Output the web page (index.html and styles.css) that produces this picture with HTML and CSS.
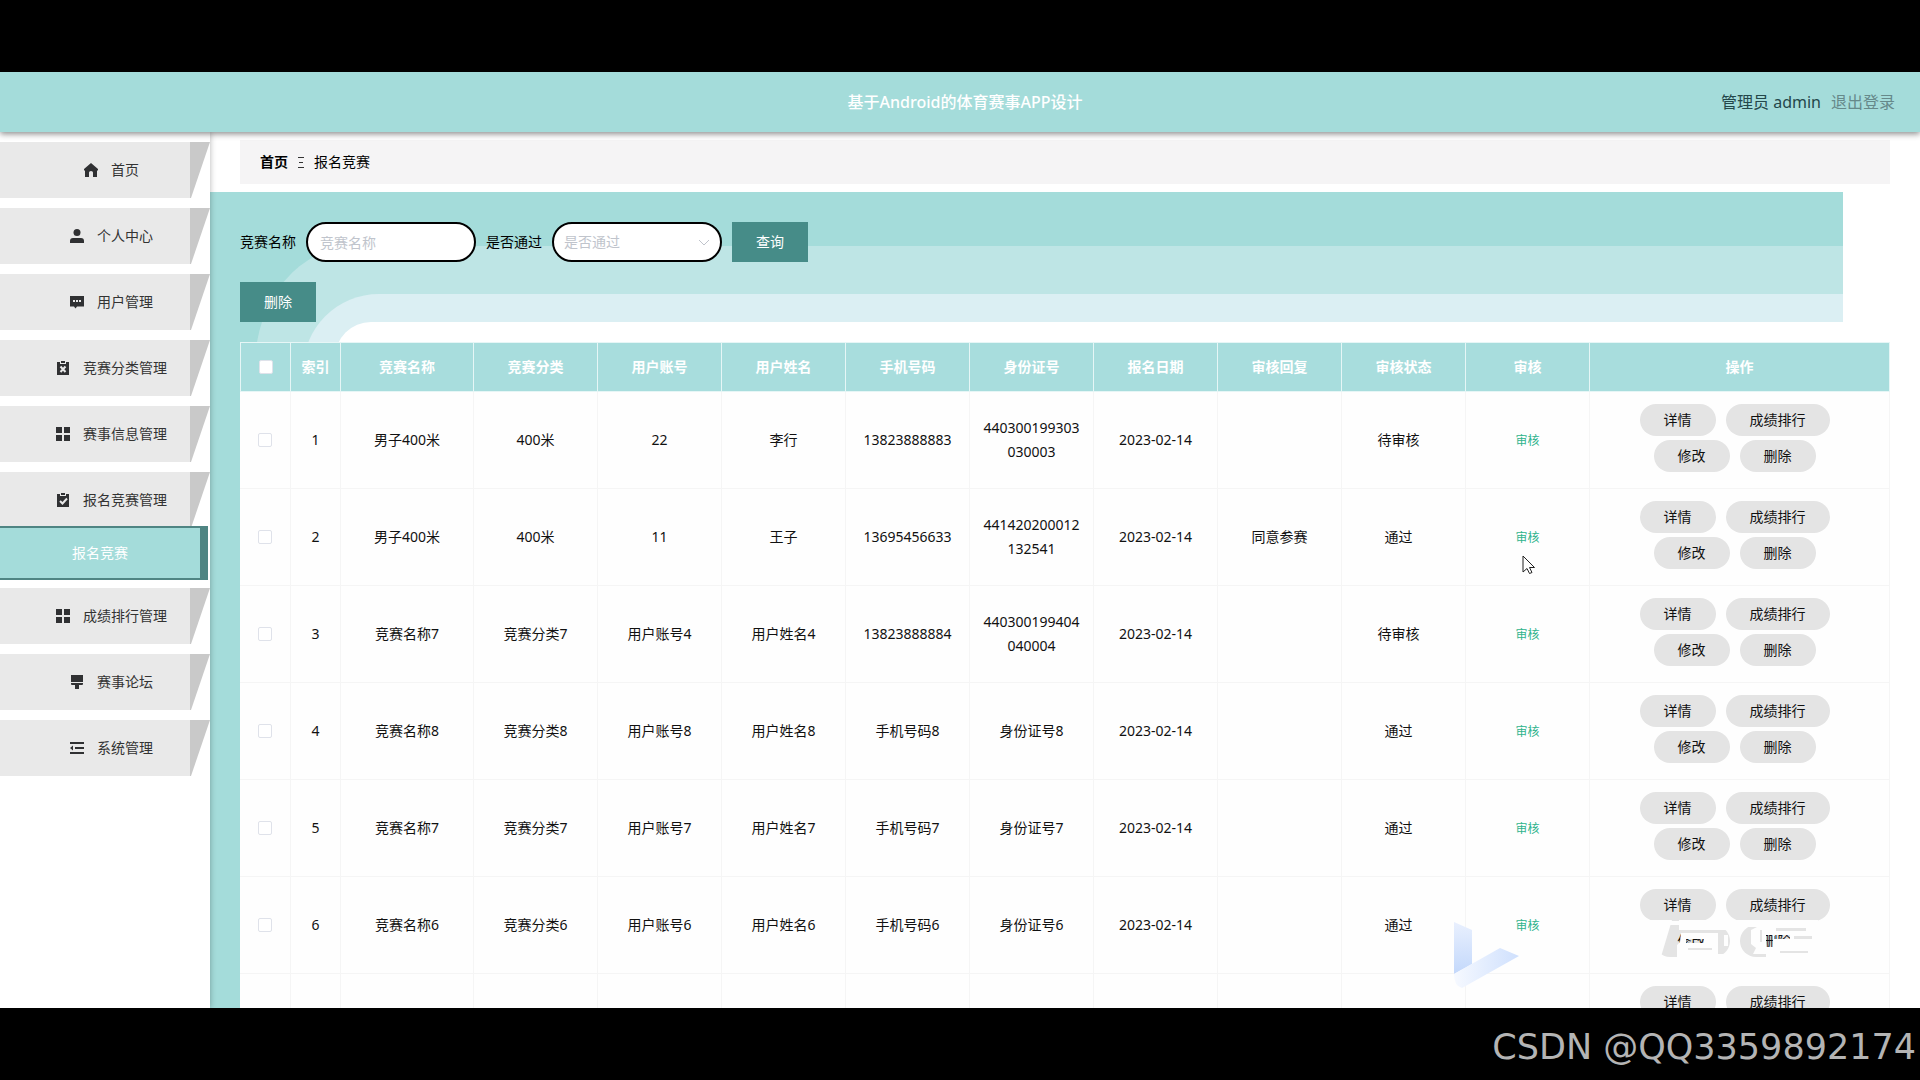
FILE: index.html
```html
<!DOCTYPE html>
<html lang="zh-CN">
<head>
<meta charset="utf-8">
<title>基于Android的体育赛事APP设计</title>
<link rel="stylesheet" href="styles.css">
</head>
<body>
<div class="stage">
  <header class="topbar">
    <h1 class="topbar-title">基于Android的体育赛事APP设计</h1>
    <div class="topbar-user"><span>管理员 admin</span><a href="#" class="logout">退出登录</a></div>
  </header>
  <div class="layout">
    <nav class="sidebar">
      <a href="#" class="menu-item"><span class="menu-label"><svg class="icon" viewBox="0 0 14 14"><path d="M7 0L0 6V7.500H1V14H5V9.500Q5 8 7 8Q9 8 9 9.500V14H13V7.500H14V6Z"/></svg>首页</span></a>
      <a href="#" class="menu-item"><span class="menu-label"><svg class="icon" viewBox="0 0 14 14"><circle cx="7" cy="3.500" r="3.500"/><path d="M0 14V12Q0 9 3 9H11Q14 9 14 12V14Z"/></svg>个人中心</span></a>
      <a href="#" class="menu-item"><span class="menu-label"><svg class="icon" viewBox="0 0 14 14"><path fill-rule="evenodd" d="M0 1H14V11.500H7L5.500 13.500L4 11.500H0ZM3 5V7H5V5ZM6 5V7H8V5ZM9 5V7H11V5Z"/></svg>用户管理</span></a>
      <a href="#" class="menu-item"><span class="menu-label"><svg class="icon" viewBox="0 0 14 14"><path d="M1 1H4V3H10V1H13V14H1ZM5 0H9V2H5Z"/><path class="cut" d="M4.500 5.500L9.500 11M9.500 5.500L4.500 11"/></svg>竞赛分类管理</span></a>
      <a href="#" class="menu-item"><span class="menu-label"><svg class="icon" viewBox="0 0 14 14"><path d="M0 0H6V6H0ZM8 0H14V6H8ZM0 8H6V14H0ZM8 8H14V14H8Z"/></svg>赛事信息管理</span></a>
      <div class="menu-group">
        <a href="#" class="menu-item"><span class="menu-label"><svg class="icon" viewBox="0 0 14 14"><path d="M1 1H4V3H10V1H13V14H1ZM5 0H9V2H5Z"/><path class="cut" d="M4 8L6.500 10.500L11 5.500"/></svg>报名竞赛管理</span></a>
        <a href="#" class="submenu-item">报名竞赛</a>
      </div>
      <a href="#" class="menu-item"><span class="menu-label"><svg class="icon" viewBox="0 0 14 14"><path d="M0 0H6V6H0ZM8 0H14V6H8ZM0 8H6V14H0ZM8 8H14V14H8Z"/></svg>成绩排行管理</span></a>
      <a href="#" class="menu-item"><span class="menu-label"><svg class="icon" viewBox="0 0 14 14"><path d="M1 0H13V7H1ZM1 8H13V9Q13 10 12 10H9V14H5V10H2Q1 10 1 9Z"/></svg>赛事论坛</span></a>
      <a href="#" class="menu-item"><span class="menu-label"><svg class="icon" viewBox="0 0 14 14"><path d="M0 1H14V3H0ZM5 6H14V8H5ZM0 11H14V13H0ZM3 4.500V9.500L0 7Z"/></svg>系统管理</span></a>
    </nav>
    <main class="main">
      <div class="crumbs"><a href="#" class="crumb-home">首页</a><span class="crumb-sep" aria-hidden="true"></span><span>报名竞赛</span></div>
      <section class="panel">
        <div class="band band-a" aria-hidden="true"><div class="band band-b"><div class="band band-c"><div class="band band-d"></div></div></div></div>
        <form class="search">
          <label for="f-name">竞赛名称</label>
          <input class="field" id="f-name" type="text" placeholder="竞赛名称">
          <label for="f-pass">是否通过</label>
          <div class="select-wrap">
            <select class="field" id="f-pass"><option>是否通过</option></select>
            <svg class="chevron" viewBox="0 0 12 8"><path d="M1 1L6 6L11 1"/></svg>
          </div>
          <button class="btn" type="button">查询</button>
        </form>
        <div class="toolbar"><button class="btn" type="button">删除</button></div>
        <table class="grid">
          <colgroup><col class="c-tick"><col class="c-index"><col class="c-name"><col><col><col><col><col><col><col><col><col><col class="c-ops"></colgroup>
          <thead><tr><th><input type="checkbox" class="tick tick-all" aria-label="全选"></th><th>索引</th><th>竞赛名称</th><th>竞赛分类</th><th>用户账号</th><th>用户姓名</th><th>手机号码</th><th>身份证号</th><th>报名日期</th><th>审核回复</th><th>审核状态</th><th>审核</th><th>操作</th></tr></thead>
          <tbody id="rows"></tbody>
        </table>
      </section>
    </main>
  </div>
  <svg class="cursor" viewBox="0 0 14 20"><path d="M1 1V17L5 13.500L7.500 18.500L10 17.500L7.500 12.500H12.500Z"/></svg>
  <svg class="logo-mark" viewBox="0 0 66 72"><defs><linearGradient id="g1" x1="0" y1="0" x2="0" y2="1"><stop offset="0" stop-color="#e9f0fe"/><stop offset="1" stop-color="#c3d8fb"/></linearGradient><linearGradient id="g2" x1="0" y1="0" x2="1" y2="0"><stop offset="0" stop-color="#f6f9ff"/><stop offset="1" stop-color="#cfe0fd"/></linearGradient></defs><path fill="url(#g1)" d="M0 4L18 12V46L0 56Z"/><path fill="url(#g2)" d="M0 56L46 30L65 38L8 70Q0 68 0 56Z"/></svg>
  <svg class="ghost-mark" viewBox="0 0 190 50"><path fill-rule="evenodd" d="M8 2H32L20 42H8ZM39 2H92V12H39ZM41 15H78V42H37V27L40 24ZM46 21V25H64V21ZM48 30V32H72V30ZM84 17H88V28H84ZM78 36H92V42H78Z"/><path fill-rule="evenodd" d="M96 2H178V42H126V36H113L116 30L111 26V12L117 9H96ZM126 17V29H133V17ZM136 10V13H166V10ZM134 17V21H150V17ZM154 18V21H172V18ZM140 33V35H168V33ZM120 12V24H122V12Z"/></svg>
</div>
<div class="credit">CSDN @QQ3359892174</div>
<script src="rows.js"></script>
</body>
</html>
```
FILE: styles.css
```css
* { box-sizing: border-box; }
body {
  margin: 0;
  min-height: 100vh;
  display: flex;
  flex-direction: column;
  padding-top: 72px;
  background: #000;
  color: #111;
  font: 14px/24px "Noto Sans", "Noto Sans CJK SC", sans-serif;
  overflow: hidden;
}
a { color: inherit; text-decoration: none; }
button, input, select { font: inherit; }
.stage {
  position: relative;
  height: calc(100vh - 144px);
  display: flex;
  flex-direction: column;
  background: #fff;
  overflow: hidden;
}
.topbar {
  position: relative;
  z-index: 2;
  flex: none;
  height: 60px;
  display: grid;
  grid-template-columns: 1fr auto 1fr;
  align-items: center;
  padding: 0 25px 0 35px;
  background: #a4dcda;
  box-shadow: 0 2px 6px rgba(0, 0, 0, .45);
  font-size: 16px;
}
.topbar-title { grid-column: 2; margin: 0; font-size: 16px; font-weight: 500; color: #fff; }
.topbar-user { justify-self: end; display: flex; gap: 10px; color: #24474a; }
.logout { color: #66898a; }
.layout { flex: 1; display: flex; align-items: stretch; min-height: 0; }

.sidebar {
  position: relative;
  z-index: 1;
  flex: none;
  width: 210px;
  padding-top: 10px;
  display: flex;
  flex-direction: column;
  gap: 10px;
  background: #fff;
  box-shadow: 0 0 6px rgba(0, 0, 0, .3);
}
.menu-item {
  display: block;
  height: 56px;
  padding-right: 20px;
  background: #c9c9c9;
  color: #333;
  clip-path: polygon(0 0, 100% 0, 191px 100%, 0 100%);
}
.menu-label {
  height: 100%;
  display: flex;
  align-items: center;
  justify-content: center;
  gap: 13px;
  padding-left: 33px;
  background: #e9e9e9;
}
.icon { width: 14px; height: 14px; fill: #303133; }
.icon .cut { fill: none; stroke: #e9e9e9; stroke-width: 2; }
.submenu-item {
  position: relative;
  display: flex;
  align-items: center;
  justify-content: center;
  height: 54px;
  margin: -2px 2px -2px 0;
  border: solid #4f8583;
  border-width: 2px 8px 2px 0;
  background: #a4dcda;
  color: #fff;
}

.main { flex: 1; min-width: 0; display: flex; flex-direction: column; padding-top: 8px; }
.crumbs {
  flex: none;
  display: flex;
  align-items: center;
  gap: 10px;
  height: 44px;
  margin: 0 30px 8px;
  padding: 0 20px;
  background: #f5f4f5;
  color: #000;
}
.crumb-home { font-weight: 700; }
.crumb-sep { width: 6px; height: 11px; border: solid #333; border-width: 1px 0; background: linear-gradient(#333, #333) center / 4px 1px no-repeat; }
.panel { position: relative; z-index: 0; flex: 1; padding: 30px 30px 0; }
.band { position: absolute; bottom: 0; right: 0; }
.band-a { z-index: -1; inset: 0 77px 0 0; background: #a4dcda; }
.band-b { top: 54px; left: 45px; background: #bee5e5; border-top-left-radius: 100px 120px; }
.band-c { top: 48px; left: 48px; background: #dbeff3; border-top-left-radius: 76px; }
.band-d { top: 28px; left: 32px; background: #fff; border-top-left-radius: 36px; }
.search { display: flex; align-items: center; gap: 10px; color: #000; }
.field {
  width: 170px;
  height: 40px;
  padding: 0 12px;
  border: 2px solid #000;
  border-radius: 20px;
  background: #fff;
  color: #c0c4cc;
  appearance: none;
}
.field::placeholder { color: #c0c4cc; opacity: 1; }
.select-wrap { position: relative; display: flex; }
.select-wrap .field { padding: 0 10px; }
.chevron { position: absolute; right: 12px; top: 17px; width: 12px; height: 8px; fill: none; stroke: #c0c4cc; }
.btn { width: 76px; height: 40px; padding: 0; border: 0; background: #468c88; color: #fff; }
.toolbar { display: flex; padding: 20px 0; }

.grid { width: 100%; table-layout: fixed; border-collapse: separate; border-spacing: 0; background: #fff; }
.c-tick { width: 51px; }
.c-index { width: 50px; }
.c-name { width: 133px; }
.c-ops { width: 300px; }
.grid th, .grid td { padding: 0 10px; text-align: center; vertical-align: middle; word-break: break-all; }
.grid th { height: 50px; border: solid #e6f6f6; border-width: 1px 1px 1px 0; background: #a8dddd; color: #fff; font-weight: 700; }
.grid th:first-child { border-left-width: 1px; }
.grid td { height: 97px; border: solid #f5f5f5; border-width: 0 1px 1px 0; background: #fefefe; }
.tick { display: block; width: 14px; height: 14px; margin: 0 auto; border: 1px solid #dfe2ea; border-radius: 2px; background: #fff; appearance: none; }
.state { margin-right: 10px; }
.audit { padding: 0; border: 0; background: none; color: #2fb38c; font-size: 12px; }
.ops { display: flex; flex-wrap: wrap; justify-content: center; align-content: flex-start; gap: 4px 10px; height: 72px; padding: 0 10px 4px 0; }
.pill { height: 32px; padding: 0 24px; border: 0; border-radius: 16px; background: #e4e4e4; color: #111; }

.cursor { position: absolute; z-index: 3; left: 1522px; top: 483px; width: 14px; height: 20px; fill: #fff; stroke: #222; }
.logo-mark { position: absolute; z-index: 3; left: 1454px; top: 846px; width: 66px; height: 72px; }
.ghost-mark { position: absolute; z-index: 3; left: 1640px; top: 846px; width: 190px; height: 50px; fill: #fefefe; }
.credit { flex: 1; display: flex; align-items: center; justify-content: flex-end; padding: 6px 4px 0 0; color: #b4b4b4; font: 35px/48px "DejaVu Sans", sans-serif; }
```
FILE: rows.js
```js
const rows = [
  ["1", "男子400米", "400米", "22", "李行", "13823888883", "440300199303030003", "2023-02-14", "", "待审核"],
  ["2", "男子400米", "400米", "11", "王子", "13695456633", "441420200012132541", "2023-02-14", "同意参赛", "通过"],
  ["3", "竞赛名称7", "竞赛分类7", "用户账号4", "用户姓名4", "13823888884", "440300199404040004", "2023-02-14", "", "待审核"],
  ["4", "竞赛名称8", "竞赛分类8", "用户账号8", "用户姓名8", "手机号码8", "身份证号8", "2023-02-14", "", "通过"],
  ["5", "竞赛名称7", "竞赛分类7", "用户账号7", "用户姓名7", "手机号码7", "身份证号7", "2023-02-14", "", "通过"],
  ["6", "竞赛名称6", "竞赛分类6", "用户账号6", "用户姓名6", "手机号码6", "身份证号6", "2023-02-14", "", "通过"],
  ["", "", "", "", "", "", "", "", "", ""]
];
const pill = (text) => `<button type="button" class="pill">${text}</button>`;
document.getElementById("rows").innerHTML = rows.map((row) => {
  const filled = row[0] !== "";
  const actions = filled ? ["详情", "成绩排行", "修改", "删除"] : ["详情", "成绩排行"];
  const cells = row.slice(0, 9).map((text) => `<td>${text}</td>`).join("");
  return `<tr><td>${filled ? `<input type="checkbox" class="tick" aria-label="${row[0]}">` : ""}</td>${cells}` +
    `<td><span class="state">${row[9]}</span></td>` +
    `<td>${filled ? '<button type="button" class="audit">审核</button>' : ""}</td>` +
    `<td><div class="ops">${actions.map(pill).join("")}</div></td></tr>`;
}).join("");
```
